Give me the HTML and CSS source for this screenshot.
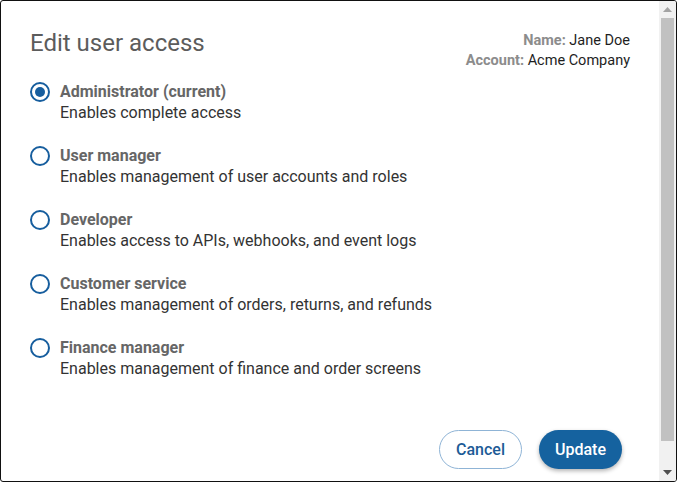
FILE: index.html
```html
<!DOCTYPE html>
<html lang="en">
<head>
<meta charset="utf-8">
<title>Edit user access</title>
<link rel="stylesheet" href="styles.css">
</head>
<body>
<div class="dialog">
  <div class="main">
    <div class="header">
      <h1 class="title">Edit user access</h1>
      <div class="info">
        <div><span class="label">Name:</span> Jane Doe</div>
        <div><span class="label">Account:</span> Acme Company</div>
      </div>
    </div>
    <div class="roles">
      <label class="role">
        <span class="radio checked"></span>
        <span class="text">
          <span class="role-name">Administrator (current)</span>
          <span class="role-desc">Enables complete access</span>
        </span>
      </label>
      <label class="role">
        <span class="radio"></span>
        <span class="text">
          <span class="role-name">User manager</span>
          <span class="role-desc">Enables management of user accounts and roles</span>
        </span>
      </label>
      <label class="role">
        <span class="radio"></span>
        <span class="text">
          <span class="role-name">Developer</span>
          <span class="role-desc">Enables access to APIs, webhooks, and event logs</span>
        </span>
      </label>
      <label class="role">
        <span class="radio"></span>
        <span class="text">
          <span class="role-name">Customer service</span>
          <span class="role-desc">Enables management of orders, returns, and refunds</span>
        </span>
      </label>
      <label class="role">
        <span class="radio"></span>
        <span class="text">
          <span class="role-name">Finance manager</span>
          <span class="role-desc">Enables management of finance and order screens</span>
        </span>
      </label>
    </div>
    <div class="footer">
      <button class="btn btn-outline">Cancel</button>
      <button class="btn btn-primary">Update</button>
    </div>
  </div>
  <div class="scrollbar">
    <div class="arrow">
      <svg width="9" height="5" viewBox="0 0 9 5"><polygon points="0,5 9,5 4.5,0" fill="#a3a3a3"/></svg>
    </div>
    <div class="track"><div class="thumb"></div></div>
    <div class="arrow">
      <svg width="9" height="5" viewBox="0 0 9 5"><polygon points="0,0 9,0 4.5,5" fill="#505050"/></svg>
    </div>
  </div>
</div>
</body>
</html>
```
FILE: styles.css
```css
* { box-sizing: border-box; }
html, body { margin: 0; padding: 0; background: #fff; }
body { font-family: Roboto, "Liberation Sans", Arial, sans-serif; }

.dialog {
  width: 677px;
  height: 482px;
  border: 1px solid #111;
  border-radius: 3px;
  display: flex;
  overflow: hidden;
  background: #fff;
}

.main {
  flex: 1;
  display: flex;
  flex-direction: column;
  padding: 27px 29px 12px 29px;
}

.header {
  display: flex;
  justify-content: space-between;
  align-items: flex-start;
}

.title {
  margin: 1px 0 0 0;
  font-size: 24px;
  line-height: 28px;
  font-weight: 400;
  color: #5c5c5c;
}

.info {
  margin-top: 3px;
  text-align: right;
  font-size: 14.5px;
  line-height: 20px;
  color: #1e1e1e;
}
.label { font-weight: 700; color: #8c8c8c; }

.roles {
  margin-top: 10px;
  display: flex;
  flex-direction: column;
  gap: 22px;
}

.role {
  display: flex;
  align-items: flex-start;
  gap: 10px;
}

.radio {
  width: 20px;
  height: 20px;
  border-radius: 50%;
  border: 2px solid #175e9e;
  margin-top: 0.5px;
  display: flex;
  align-items: center;
  justify-content: center;
  flex: none;
}
.radio.checked::after {
  content: "";
  width: 10px;
  height: 10px;
  border-radius: 50%;
  background: #175e9e;
}

.text { display: flex; flex-direction: column; }
.role-name {
  font-size: 16px;
  line-height: 21px;
  font-weight: 700;
  color: #666;
}
.role-desc {
  font-size: 16px;
  line-height: 21px;
  color: #333;
}

.footer {
  margin-top: auto;
  display: flex;
  justify-content: flex-end;
  gap: 17px;
  padding-right: 8px;
}

.btn {
  width: 83px;
  height: 39px;
  border-radius: 20px;
  font-family: Roboto, "Liberation Sans", Arial, sans-serif;
  font-size: 16px;
  font-weight: 500;
  cursor: pointer;
}
.btn-outline {
  background: #fff;
  border: 1px solid #8fb4d6;
  color: #1d5b96;
}
.btn-primary {
  background: #15629f;
  border: none;
  color: #fff;
  box-shadow: 0 2px 4px rgba(0, 0, 0, 0.3);
}

.scrollbar {
  width: 17px;
  background: #f1f1f1;
  display: flex;
  flex-direction: column;
}
.arrow {
  height: 17px;
  display: flex;
  align-items: center;
  justify-content: center;
}
.track {
  flex: 1;
  padding: 0 2px 23px 2px;
}
.thumb {
  height: 100%;
  background: #c1c1c1;
}
```
